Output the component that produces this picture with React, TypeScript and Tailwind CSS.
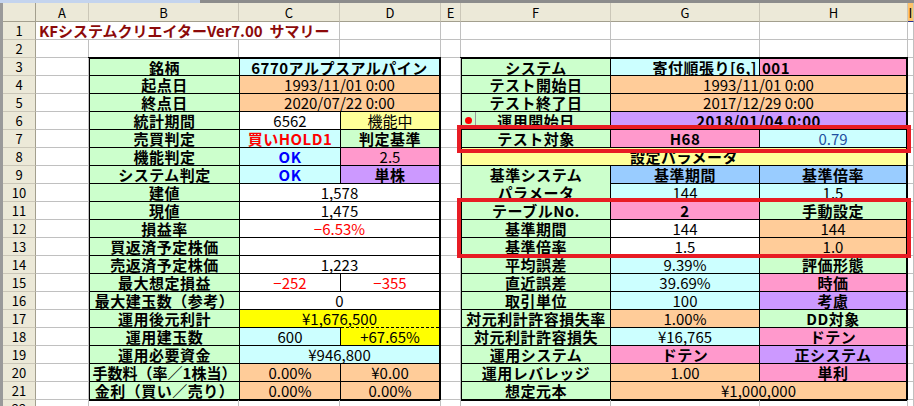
import * as React from 'react';
import clsx from 'clsx';

const BG = {
  g: 'bg-[#CCFFCC]',
  t: 'bg-[#CCFFFF]',
  o: 'bg-[#FFCC99]',
  y: 'bg-[#FFFF99]',
  p: 'bg-[#FF99CC]',
  l: 'bg-[#CC99FF]',
  Y: 'bg-[#FFFF00]',
  b: 'bg-[#99CCFF]',
  w: 'bg-white',
};

const SPAN = { 1: '', 2: 'col-span-2', 3: 'col-span-3' };
const ALIGN = { center: 'justify-center', right: 'justify-end pr-[2px]', left: 'justify-start pl-[2px]' };
const TONE = { red: 'text-[#FF0000]', blue: 'text-[#0000FF]', navy: 'text-[#1F4FA0]' };

type CellProps = {
  children?: React.ReactNode;
  bg: keyof typeof BG;
  span?: 1 | 2 | 3;
  bold?: boolean;
  tone?: keyof typeof TONE;
  align?: keyof typeof ALIGN;
  className?: string;
};

function Cell({ children, bg, span = 1, bold, tone, align = 'center', className }: CellProps) {
  return (
    <div
      className={clsx(
        'flex items-center overflow-hidden whitespace-nowrap leading-none text-[15px]',
        BG[bg],
        SPAN[span],
        ALIGN[align],
        bold ? 'font-bold tracking-[0.5px]' : 'font-normal',
        tone && TONE[tone],
        className
      )}
    >
      {children}
    </div>
  );
}

// label cell, always bold on light green
const L = ({ children, className }: { children: React.ReactNode; className?: string }) => (
  <Cell bg="g" bold className={className}>{children}</Cell>
);

const COLS = ['A', 'B', 'C', 'D', 'E', 'F', 'G', 'H', 'I'];

function ColHeader({ label, hot }: { label: string; hot?: boolean }) {
  return (
    <div
      className={clsx(
        'flex items-center justify-center text-[13px] leading-none border-r border-r-[#CBC7B8] border-b',
        hot ? 'bg-[#FFC36B] border-b-[#2B2F8F]' : 'bg-[#ECE9D8] border-b-[#A39F8E]'
      )}
    >
      {label}
    </div>
  );
}

function RowHeader({ n }: { n: number }) {
  return (
    <div className="flex items-center justify-center bg-[#ECE9D8] text-[13px] leading-none border-r border-r-[#A39F8E] border-b border-b-[#CBC7B8]">
      {n}
    </div>
  );
}

const Blank = () => <div className="border-r border-b border-[#C0C0C0]" />;

function SummaryTable() {
  return (
    <div className="col-start-3 col-end-6 row-start-4 row-end-23 -ml-px -mt-px self-start justify-self-start w-[353px] h-[344px] border-2 border-black bg-black grid grid-cols-[149px_100px_98px] grid-rows-[16px_repeat(18,17px)] gap-px">
      <L>銘柄</L>
      <Cell bg="t" span={2} bold>6770アルプスアルパイン</Cell>
      <L>起点日</L>
      <Cell bg="o" span={2}>1993/11/01 0:00</Cell>
      <L>終点日</L>
      <Cell bg="o" span={2}>2020/07/22 0:00</Cell>
      <L>統計期間</L>
      <Cell bg="w">6562</Cell>
      <Cell bg="y">機能中</Cell>
      <L>売買判定</L>
      <Cell bg="t" bold tone="red">買いHOLD1</Cell>
      <L>判定基準</L>
      <L>機能判定</L>
      <Cell bg="t" bold tone="blue">OK</Cell>
      <Cell bg="p">2.5</Cell>
      <L>システム判定</L>
      <Cell bg="t" bold tone="blue">OK</Cell>
      <Cell bg="l" bold>単株</Cell>
      <L>建値</L>
      <Cell bg="w" span={2}>1,578</Cell>
      <L>現値</L>
      <Cell bg="w" span={2}>1,475</Cell>
      <L>損益率</L>
      <Cell bg="w" span={2} tone="red">−6.53%</Cell>
      <L>買返済予定株価</L>
      <Cell bg="w" span={2} />
      <L>売返済予定株価</L>
      <Cell bg="w" span={2}>1,223</Cell>
      <L>最大想定損益</L>
      <Cell bg="w" tone="red">−252</Cell>
      <Cell bg="w" tone="red">−355</Cell>
      <L>最大建玉数（参考）</L>
      <Cell bg="w" span={2}>0</Cell>
      <L>運用後元利計</L>
      <Cell bg="Y" span={2}>¥1,676,500</Cell>
      <L>運用建玉数</L>
      <Cell bg="t">600</Cell>
      <Cell bg="Y" className="-mt-px border-t border-dashed border-black">+67.65%</Cell>
      <L>運用必要資金</L>
      <Cell bg="t" span={2}>¥946,800</Cell>
      <L className="tracking-normal">手数料（率／1株当）</L>
      <Cell bg="o">0.00%</Cell>
      <Cell bg="o">¥0.00</Cell>
      <L>金利（買い／売り）</L>
      <Cell bg="o">0.00%</Cell>
      <Cell bg="o">0.00%</Cell>
    </div>
  );
}

function SystemTable() {
  return (
    <div className="col-start-7 col-end-10 row-start-4 row-end-23 -ml-px -mt-px self-start justify-self-start w-[448px] h-[344px] border-2 border-black bg-black grid grid-cols-[148px_148px_146px] grid-rows-[16px_repeat(18,17px)] gap-px">
      <L>システム</L>
      <Cell bg="t" bold align="right">寄付順張り[6,]</Cell>
      <Cell bg="p" bold align="left">001</Cell>
      <L>テスト開始日</L>
      <Cell bg="o" span={2}>1993/11/01 0:00</Cell>
      <L>テスト終了日</L>
      <Cell bg="o" span={2}>2017/12/29 0:00</Cell>
      <L className="relative">
        <span className="absolute left-0 top-0 h-full w-[14px] border-r border-[#9A9A9A] flex items-center justify-center">
          <span className="h-[7px] w-[7px] rounded-full bg-[#FF0000]" />
        </span>
        運用開始日
      </L>
      <Cell bg="l" span={2} bold>2018/01/04 0:00</Cell>
      <L>テスト対象</L>
      <Cell bg="p" bold>H68</Cell>
      <Cell bg="t" tone="navy">0.79</Cell>
      <Cell bg="y" span={3} bold>設定パラメータ</Cell>
      <div className="row-span-2 flex flex-col bg-[#CCFFCC] font-bold tracking-[0.5px] text-[15px] leading-none">
        <span className="flex h-[17px] items-center justify-center">基準システム</span>
        <span className="flex h-[18px] items-center justify-center">パラメータ</span>
      </div>
      <Cell bg="b" bold>基準期間</Cell>
      <Cell bg="b" bold>基準倍率</Cell>
      <Cell bg="t">144</Cell>
      <Cell bg="t">1.5</Cell>
      <L>テーブルNo.</L>
      <Cell bg="p" bold>2</Cell>
      <L>手動設定</L>
      <L>基準期間</L>
      <Cell bg="w">144</Cell>
      <Cell bg="o">144</Cell>
      <L>基準倍率</L>
      <Cell bg="w">1.5</Cell>
      <Cell bg="o">1.0</Cell>
      <L>平均誤差</L>
      <Cell bg="t">9.39%</Cell>
      <L>評価形態</L>
      <L>直近誤差</L>
      <Cell bg="t">39.69%</Cell>
      <Cell bg="p" bold>時価</Cell>
      <L>取引単位</L>
      <Cell bg="t">100</Cell>
      <Cell bg="l" bold>考慮</Cell>
      <L>対元利計許容損失率</L>
      <Cell bg="o">1.00%</Cell>
      <L>DD対象</L>
      <L>対元利計許容損失</L>
      <Cell bg="t">¥16,765</Cell>
      <Cell bg="p" bold>ドテン</Cell>
      <L>運用システム</L>
      <Cell bg="p" bold>ドテン</Cell>
      <Cell bg="l" bold>正システム</Cell>
      <L>運用レバレッジ</L>
      <Cell bg="o">1.00</Cell>
      <Cell bg="p" bold>単利</Cell>
      <L>想定元本</L>
      <Cell bg="o" span={2}>¥1,000,000</Cell>
    </div>
  );
}

export default function App() {
  const bodyRows = Array.from({ length: 19 }, (_, i) => i + 3);

  return (
    <div className="relative w-[914px] h-[406px] overflow-hidden bg-white text-black font-['Noto_Sans_CJK_JP',sans-serif]">
      <div className="flex h-[3px]">
        <div className="w-[200px] bg-[#C4D4EE]" />
        <div className="flex-1 bg-[#8C8C8C]" />
      </div>

      <div className="grid grid-cols-[33px_53px_150px_101px_101px_20px_150px_149px_148px_1fr] grid-rows-[19px_repeat(22,18px)] border-l-[3px] border-[#9A9A9A]">
        {/* column headers */}
        <div className="bg-[#ECE9D8] border-r border-r-[#A39F8E] border-b border-b-[#A39F8E]" />
        {COLS.map((c) => (
          <ColHeader key={c} label={c} hot={c === 'I'} />
        ))}

        {/* row 1: title overflows A..C */}
        <RowHeader n={1} />
        <div className="col-span-3 flex items-center pl-[3px] border-r border-b border-[#C0C0C0] text-[15px] font-bold leading-none text-[#8C0A0A] whitespace-pre">
          KFシステムクリエイターVer7.00  サマリー
        </div>
        {COLS.slice(3).map((c) => <Blank key={c} />)}

        {/* row 2 */}
        <RowHeader n={2} />
        {COLS.map((c) => <Blank key={c} />)}

        <SummaryTable />
        <SystemTable />

        {bodyRows.map((n) => (
          <React.Fragment key={n}>
            <RowHeader n={n} />
            <Blank />
            <Blank />
            <Blank />
          </React.Fragment>
        ))}

        {/* row 22, mostly cut off */}
        <RowHeader n={22} />
        {COLS.map((c) => <Blank key={c} />)}
      </div>

      {/* red annotation frames */}
      <div className="absolute left-[457px] top-[125px] w-[454px] h-[28px] border-4 border-[#E81C24]" />
      <div className="absolute left-[457px] top-[198px] w-[454px] h-[60px] border-4 border-[#E81C24]" />
    </div>
  );
}
